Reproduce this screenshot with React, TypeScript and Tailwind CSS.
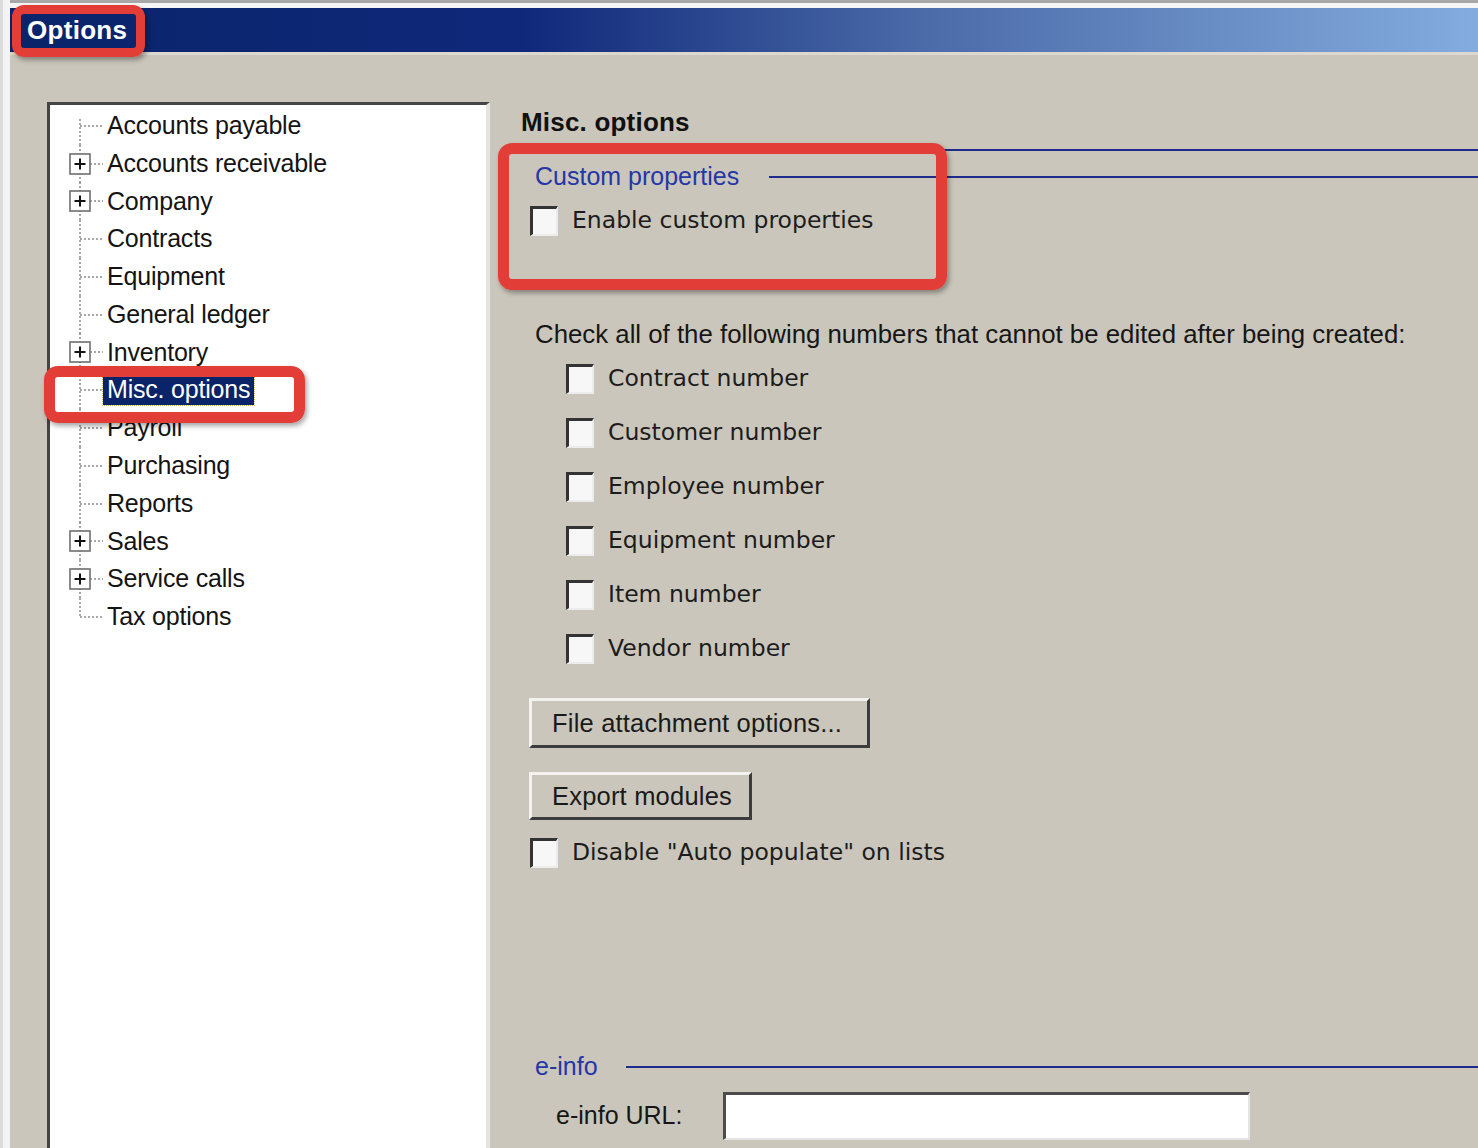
import React from 'react';

const sans = { fontFamily: '"Liberation Sans", Arial, sans-serif' };
const wide = { fontFamily: '"DejaVu Sans", Verdana, sans-serif' };

type TreeItem = { label: string; plus?: boolean; selected?: boolean };

const treeItems: TreeItem[] = [
    { label: 'Accounts payable' },
    { label: 'Accounts receivable', plus: true },
    { label: 'Company', plus: true },
    { label: 'Contracts' },
    { label: 'Equipment' },
    { label: 'General ledger' },
    { label: 'Inventory', plus: true },
    { label: 'Misc. options', selected: true },
    { label: 'Payroll' },
    { label: 'Purchasing' },
    { label: 'Reports' },
    { label: 'Sales', plus: true },
    { label: 'Service calls', plus: true },
    { label: 'Tax options' },
];

const lockedNumbers = [
    'Contract number',
    'Customer number',
    'Employee number',
    'Equipment number',
    'Item number',
    'Vendor number',
];

function Connector({ first, last, plus }: { first: boolean; last: boolean; plus?: boolean }) {
    return (
        <svg width="36" height="38" viewBox="0 0 36 38" className="shrink-0 overflow-visible">
            <line
                x1="12"
                y1={first ? 12 : 0}
                x2="12"
                y2={last ? 19 : 38}
                stroke="#8a8a8a"
                strokeWidth="1.5"
                strokeDasharray="2 2"
            />
            <line x1={plus ? 22 : 12} y1="19" x2="35" y2="19" stroke="#8a8a8a" strokeWidth="1.5" strokeDasharray="2 2" />
            {plus && (
                <g>
                    <rect x="2" y="9" width="20" height="20" fill="#fff" stroke="#6e6e6e" strokeWidth="1.6" />
                    <line x1="6.5" y1="19" x2="17.5" y2="19" stroke="#111" strokeWidth="2" />
                    <line x1="12" y1="13.5" x2="12" y2="24.5" stroke="#111" strokeWidth="2" />
                </g>
            )}
        </svg>
    );
}

function CheckBox() {
    return (
        <div className="w-[28px] h-[30px] shrink-0 bg-[#f7f7f7] border-t-[3px] border-l-[3px] border-t-[#333] border-l-[#333] border-r-[2px] border-b-[2px] border-r-[#ececec] border-b-[#ececec]" />
    );
}

function Check({ label }: { label: string }) {
    return (
        <div className="flex items-center gap-[14px]">
            <CheckBox />
            <span className="text-[23.5px] text-[#1c1c1c] leading-none" style={wide}>
                {label}
            </span>
        </div>
    );
}

function Button({ label, w, h }: { label: string; w: string; h: string }) {
    return (
        <div
            className={`${w} ${h} flex items-center pl-[20px] bg-[#cac6bb] border-t-[3px] border-l-[3px] border-t-[#f4f2ee] border-l-[#f4f2ee] border-r-[3px] border-b-[3px] border-r-[#3c3c3c] border-b-[#3c3c3c] text-[25.5px] text-[#1a1a1a] tracking-[0.2px]`}
            style={sans}
        >
            {label}
        </div>
    );
}

export default function App() {
    return (
        <div className="relative w-[1478px] h-[1148px] overflow-hidden bg-[#cac6bb] flex" style={sans}>
            {/* left edge of window behind */}
            <div className="w-[10px] h-full bg-[#f4f4f4] border-l-[3px] border-l-[#dcdcdc] shrink-0" />

            <div className="flex-1 flex flex-col">
                <div className="h-[3px] bg-[#a8a8a8]" />
                <div className="h-[5px] bg-[#f6f6f6]" />

                {/* Title bar */}
                <div className="h-[44px] flex items-center pl-[17px] bg-[linear-gradient(to_right,#0a246a_0%,#10287a_35%,#4a6aa8_62%,#84acdf_100%)]">
                    <span className="text-white font-bold text-[26px] leading-none tracking-[0.3px]">Options</span>
                </div>
                <div className="h-[3px] bg-[#dcd8d0]" />

                <div className="flex-1 flex">
                    {/* Tree */}
                    <div className="pl-[37px] pt-[47px] shrink-0">
                        <div className="w-[443px] h-full bg-white border-t-[3px] border-l-[3px] border-t-[#444] border-l-[#444] border-r-[4px] border-r-[#e6e4df] pt-[2px] pl-[18px]">
                            {treeItems.map((item, i) => (
                                <div key={item.label} className="h-[37.77px] flex items-center">
                                    <Connector first={i === 0} last={i === treeItems.length - 1} plus={item.plus} />
                                    <span
                                        className={
                                            item.selected
                                                ? 'ml-[-1px] px-[4px] h-[30px] flex items-center bg-[#0a246a] text-white text-[25px] tracking-[-0.2px] outline-dotted outline-1 outline-[#c8b860]'
                                                : 'ml-[3px] text-[25px] text-[#141414] tracking-[-0.2px]'
                                        }
                                    >
                                        {item.label}
                                    </span>
                                </div>
                            ))}
                        </div>
                    </div>

                    {/* Misc. options panel */}
                    <div className="flex-1 flex flex-col pt-[49px]">
                        <div className="h-[36px] flex items-center pl-[31px]">
                            <span className="font-bold text-[26px] text-[#111] tracking-[0.2px]">Misc. options</span>
                        </div>
                        <div className="h-[20px] flex items-center pl-[450px]">
                            <div className="flex-1 h-[2px] bg-[#1d2c8c]" />
                        </div>

                        <div className="h-[34px] flex items-center pl-[45px]">
                            <span className="text-[25px] text-[#2536a6]">Custom properties</span>
                            <div className="ml-[30px] flex-1 h-[2px] bg-[#1d2c8c]" />
                        </div>
                        <div className="h-[54px] flex items-center pl-[40px]">
                            <Check label="Enable custom properties" />
                        </div>

                        <div className="h-[68px]" />
                        <div className="h-[36px] flex items-center pl-[45px]">
                            <span className="text-[25.8px] text-[#161616]">
                                Check all of the following numbers that cannot be edited after being created:
                            </span>
                        </div>
                        {lockedNumbers.map((n) => (
                            <div key={n} className="h-[54px] flex items-center pl-[76px]">
                                <Check label={n} />
                            </div>
                        ))}

                        <div className="h-[22px]" />
                        <div className="pl-[39px] flex flex-col gap-[24px]">
                            <Button label="File attachment options..." w="w-[341px]" h="h-[50px]" />
                            <Button label="Export modules" w="w-[223px]" h="h-[48px]" />
                        </div>
                        <div className="h-[10px]" />
                        <div className="h-[46px] flex items-center pl-[40px]">
                            <Check label={'Disable "Auto populate" on lists'} />
                        </div>

                        <div className="h-[174px]" />
                        <div className="h-[34px] flex items-center pl-[45px]">
                            <span className="text-[25px] text-[#2536a6]">e-info</span>
                            <div className="ml-[28px] flex-1 h-[2px] bg-[#1d2c8c]" />
                        </div>
                        <div className="h-[8px]" />
                        <div className="h-[48px] flex items-center pl-[66px]">
                            <span className="w-[167px] text-[25px] text-[#161616]">e-info URL:</span>
                            <div className="w-[527px] h-[48px] bg-white border-t-[3px] border-l-[3px] border-t-[#4c4c4c] border-l-[#4c4c4c] border-r-[2px] border-b-[2px] border-r-[#e4e4e4] border-b-[#e4e4e4]" />
                        </div>
                    </div>
                </div>
            </div>

            {/* red annotation boxes */}
            <div className="absolute left-[12px] top-[5px] w-[133px] h-[52px] border-[9px] border-[#e23d36] rounded-[12px] shadow-[2px_3px_5px_rgba(0,0,0,0.35)]" />
            <div className="absolute left-[44px] top-[366px] w-[261px] h-[57px] border-[11px] border-[#e23d36] rounded-[14px] shadow-[2px_3px_5px_rgba(0,0,0,0.35)]" />
            <div className="absolute left-[498px] top-[143px] w-[449px] h-[147px] border-[11px] border-[#e23d36] rounded-[14px] shadow-[2px_3px_5px_rgba(0,0,0,0.35)]" />
        </div>
    );
}
